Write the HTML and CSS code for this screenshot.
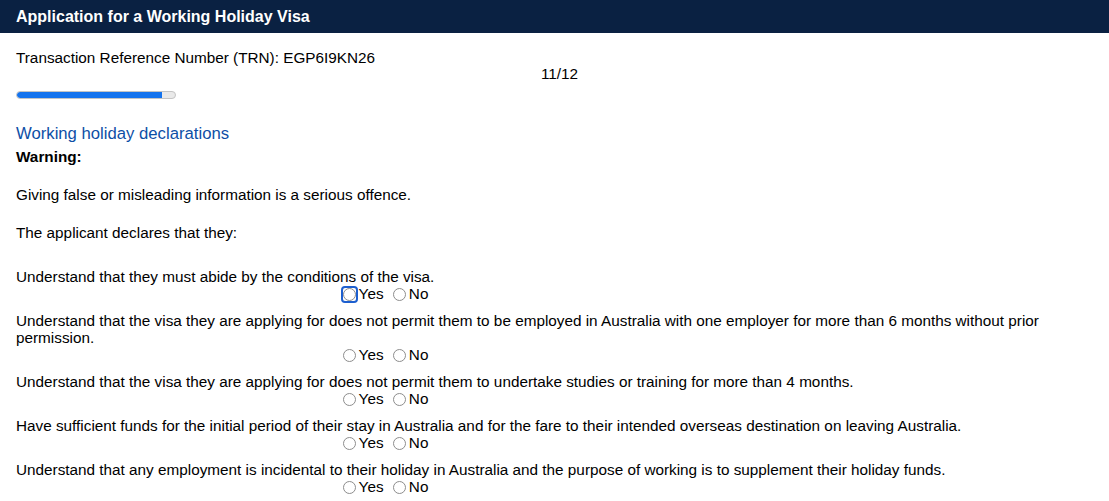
FILE: index.html
```html
<!DOCTYPE html>
<html lang="en">
<head>
  <meta charset="UTF-8">
  <meta name="viewport" content="width=device-width, initial-scale=1.0">
  <title>Application for a Working Holiday Visa</title>
  <link rel="stylesheet" href="styles.css">
</head>
<body>

  <header class="topbar">
    <h1>Application for a Working Holiday Visa</h1>
  </header>

  <main class="content">
    <div class="trn">Transaction Reference Number (TRN): EGP6I9KN26</div>
    <div class="step">11/12</div>
    <div class="progress">
      <div class="progress-fill" style="width: 91.67%"></div>
    </div>

    <h2>Working holiday declarations</h2>
    <p class="warning"><strong>Warning:</strong></p>
    <p>Giving false or misleading information is a serious offence.</p>
    <p>The applicant declares that they:</p>

    <form id="declarations">
      <div class="question">
        <div class="question-text">Understand that they must abide by the conditions of the visa.</div>
        <div class="answers">
          <label><input type="radio" name="q1" value="yes" class="focused">Yes</label>
          <label><input type="radio" name="q1" value="no">No</label>
        </div>
      </div>
      <div class="question">
        <div class="question-text">Understand that the visa they are applying for does not permit them to be employed in Australia with one employer for more than 6 months without prior permission.</div>
        <div class="answers">
          <label><input type="radio" name="q2" value="yes">Yes</label>
          <label><input type="radio" name="q2" value="no">No</label>
        </div>
      </div>
      <div class="question">
        <div class="question-text">Understand that the visa they are applying for does not permit them to undertake studies or training for more than 4 months.</div>
        <div class="answers">
          <label><input type="radio" name="q3" value="yes">Yes</label>
          <label><input type="radio" name="q3" value="no">No</label>
        </div>
      </div>
      <div class="question">
        <div class="question-text">Have sufficient funds for the initial period of their stay in Australia and for the fare to their intended overseas destination on leaving Australia.</div>
        <div class="answers">
          <label><input type="radio" name="q4" value="yes">Yes</label>
          <label><input type="radio" name="q4" value="no">No</label>
        </div>
      </div>
      <div class="question">
        <div class="question-text">Understand that any employment is incidental to their holiday in Australia and the purpose of working is to supplement their holiday funds.</div>
        <div class="answers">
          <label><input type="radio" name="q5" value="yes">Yes</label>
          <label><input type="radio" name="q5" value="no">No</label>
        </div>
      </div>
    </form>
  </main>

</body>
</html>
```

FILE: styles.css
```css
body {
  font-family: "Liberation Sans", Arial, Helvetica, sans-serif;
  font-size: 15.3px;
  color: #000;
  margin: 0;
  padding: 0;
  background-color: #fff;
}

.topbar {
  background-color: #0a2142;
  height: 33px;
  display: flex;
  align-items: center;
  padding: 0 16px;
}

.topbar h1 {
  margin: 0;
  color: #fff;
  font-size: 16px;
  font-weight: bold;
}

.content {
  padding: 17px 16px 0 16px;
  line-height: 16px;
}

.step {
  text-align: center;
  padding-left: 10px;
}

.progress {
  width: 158px;
  height: 6px;
  margin-top: 9px;
  background-color: #e9e9e9;
  border: 1px solid #c4c4c4;
  border-radius: 4px;
  overflow: hidden;
}

.progress-fill {
  height: 100%;
  background-color: #1473ee;
  border-radius: 4px 0 0 4px;
}

.content h2 {
  margin: 26px 0 6px 0;
  font-size: 16.7px;
  font-weight: normal;
  line-height: 18px;
  color: #0d4fa6;
}

.content p {
  margin: 0 0 22px 0;
}

#declarations {
  margin-top: 27px;
}

.question {
  margin-bottom: 10px;
}

.question-text {
  line-height: 17px;
}

.answers {
  width: 734px;
  height: 17px;
  line-height: 17px;
  text-align: center;
}

.answers label {
  white-space: nowrap;
}

.answers input[type="radio"] {
  appearance: none;
  -webkit-appearance: none;
  position: relative;
  width: 13px;
  height: 13px;
  margin: 0 3px 0 5px;
  border: 1px solid #8d8d8d;
  border-radius: 50%;
  background-color: #fff;
  vertical-align: -2px;
  box-sizing: border-box;
}

/* keyboard focus box around the first answer */
.answers input[type="radio"].focused::after {
  content: "";
  position: absolute;
  left: -3px;
  top: -3px;
  width: 17px;
  height: 17px;
  box-sizing: border-box;
  border: 2px solid #1d5fcf;
  border-radius: 4px;
}
```
